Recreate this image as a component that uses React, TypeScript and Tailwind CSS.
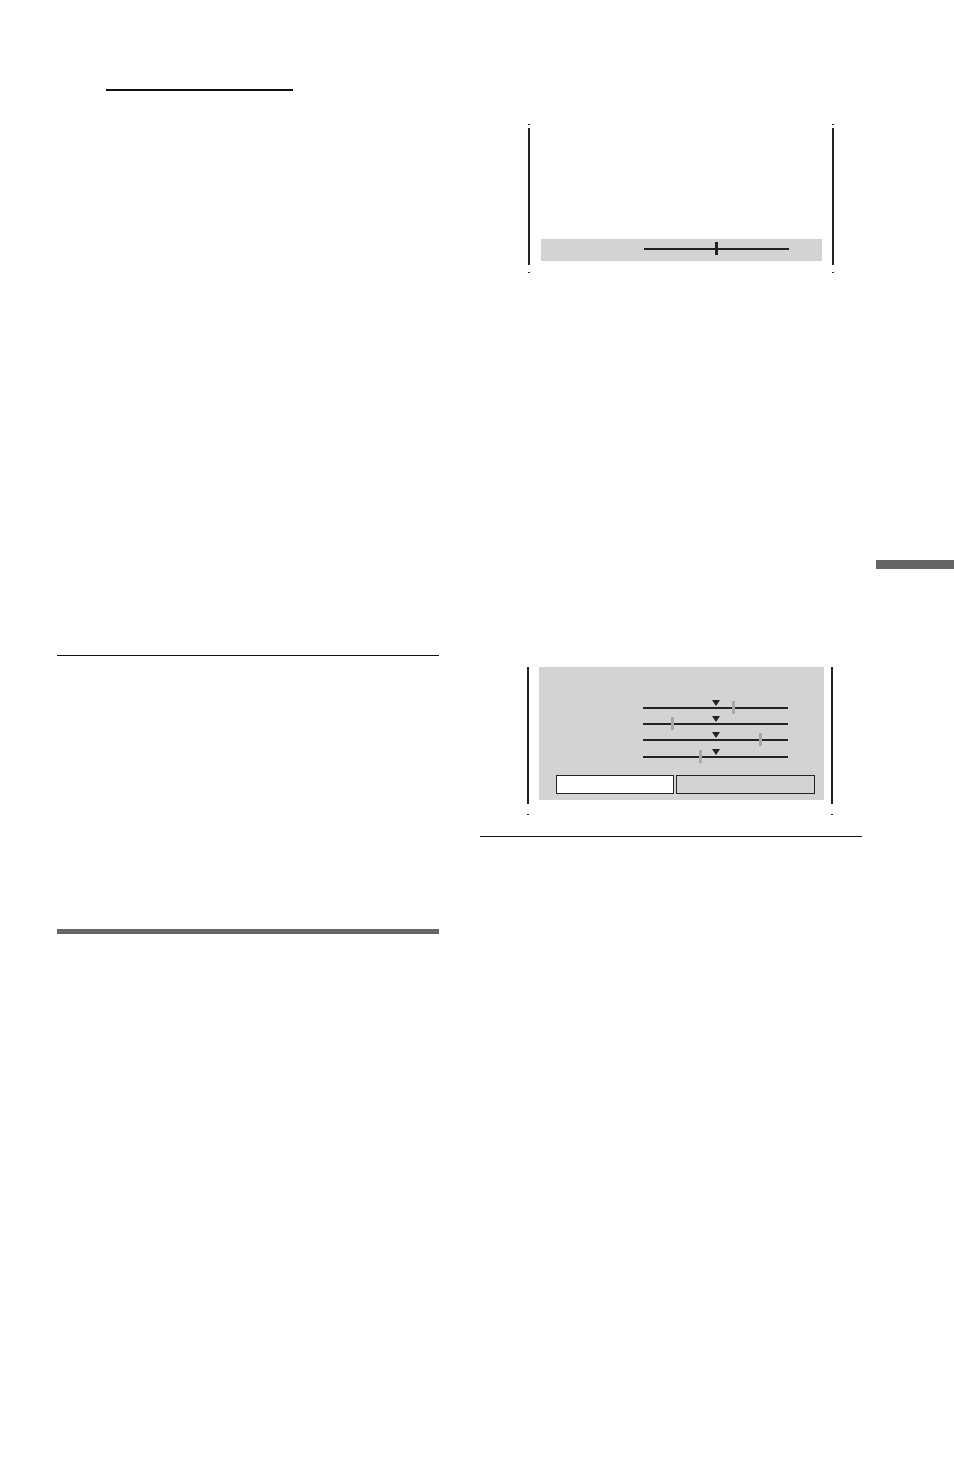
import React from "react";

const Ticks = () => (
  <div className="flex justify-between h-px">
    <div className="w-[2px] h-px bg-[#222]" />
    <div className="w-[2px] h-px bg-[#222]" />
  </div>
);

// one slider row of the adjustment screen
const SliderRow = ({ mark, last }: { mark: number; last?: boolean }) => (
  <div className={last ? "h-[17px] flex items-end" : "h-[16px] flex items-end"}>
    <div className="relative ml-[104px] w-[145px] h-[2px] bg-[#222]">
      <div
        className="absolute bottom-[3px] left-[69px] w-0 h-0 border-l-[4px] border-r-[4px] border-t-[6px] border-l-transparent border-r-transparent border-t-[#222]"
      />
      <div className="absolute top-[-6px] w-[3px] h-[13px] bg-[#a8a8a8]" style={{ left: mark }} />
    </div>
  </div>
);

const App = () => {
  return (
    <div className="w-[954px] h-[1482px] bg-white flex pl-[57px]">
      {/* left column */}
      <div className="w-[382px] flex flex-col">
        <div className="mt-[89px] ml-[49px] w-[187px] h-[2px] bg-[#111]" />
        <div className="mt-[564px] h-px bg-[#111]" />
        <div className="mt-[273px] h-[5px] bg-[#666]" />
      </div>

      {/* right column */}
      <div className="ml-[41px] w-[382px] flex flex-col">
        {/* figure 1 */}
        <div className="mt-[124px] ml-[48px] w-[306px] flex flex-col">
          <Ticks />
          <div className="mt-[3px] h-[137px] flex">
            <div className="w-[2px] bg-[#222]" />
            <div className="flex-1 flex flex-col justify-end pl-[11px] pr-[10px] pb-[4px]">
              <div className="h-[22px] bg-[#d3d3d3] pt-[9px]">
                <div className="relative ml-[103px] w-[145px] h-[2px] bg-[#222]">
                  <div className="absolute left-[71px] top-[-6px] w-[3px] h-[13px] bg-[#222]" />
                </div>
              </div>
            </div>
            <div className="w-[2px] bg-[#222]" />
          </div>
          <div className="mt-[7px]">
            <Ticks />
          </div>
        </div>

        {/* figure 2 */}
        <div className="mt-[394px] ml-[47px] w-[306px] flex flex-col">
          <div className="h-[137px] flex">
            <div className="w-[2px] bg-[#222]" />
            <div className="flex-1 pl-[10px] pr-[7px]">
              <div className="h-[133px] bg-[#d3d3d3] pt-[26px]">
                <SliderRow mark={89} />
                <SliderRow mark={28} />
                <SliderRow mark={116} />
                <SliderRow mark={56} last />
                <div className="mt-[17px] ml-[17px] flex gap-[2px]">
                  <div className="w-[118px] h-[19px] bg-white border border-[#222]" />
                  <div className="w-[139px] h-[19px] bg-[#d3d3d3] border border-[#222]" />
                </div>
              </div>
            </div>
            <div className="w-[2px] bg-[#222]" />
          </div>
          <div className="mt-[10px]">
            <Ticks />
          </div>
        </div>

        <div className="mt-[21px] h-px bg-[#111]" />
      </div>

      {/* side tab */}
      <div className="ml-[14px] w-[78px] flex flex-col">
        <div className="mt-[560px] h-[9px] bg-[#666]" />
      </div>
    </div>
  );
};

export default App;
